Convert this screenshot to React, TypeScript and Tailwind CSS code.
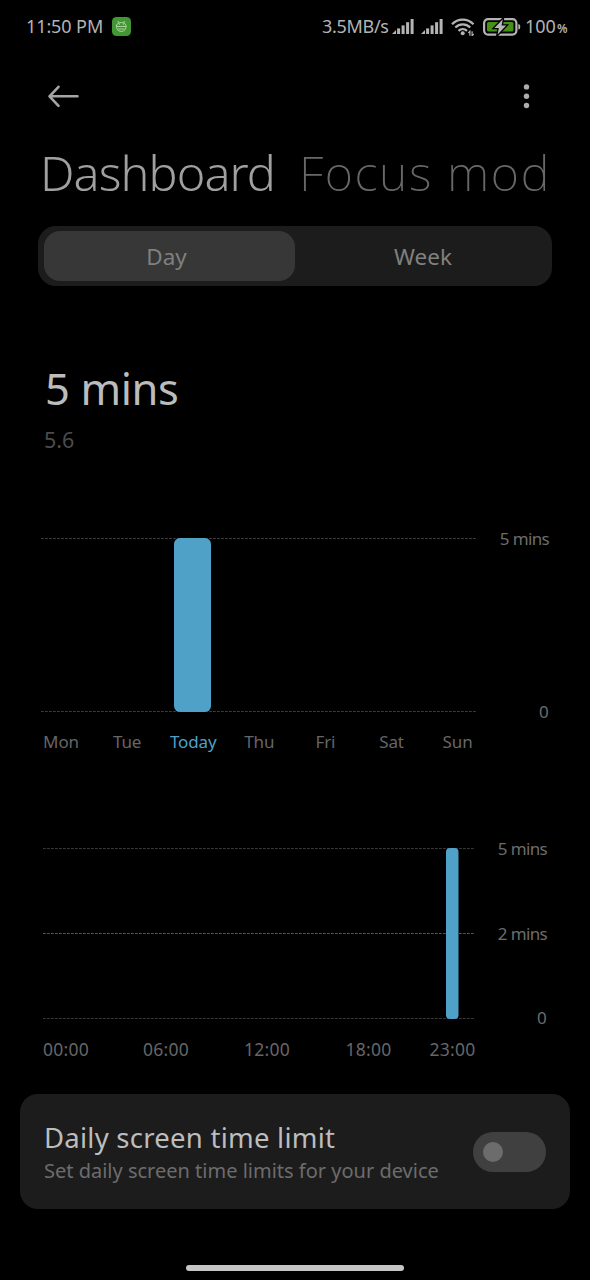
const weekDays = ["Mon", "Tue", "Today", "Thu", "Fri", "Sat", "Sun"];

function SignalIcon() {
  return (
    <svg width="22" height="16" viewBox="0 0 22 16" fill="#b4b4b4">
      <path d="M0 15 L4 11 V15Z" />
      <rect x="5.1" y="9.4" width="3" height="5.6" />
      <rect x="9.6" y="6.4" width="3" height="8.6" />
      <rect x="14.1" y="3.2" width="3" height="11.8" />
      <rect x="18.6" y="0" width="3" height="15" />
    </svg>
  );
}

function WifiIcon() {
  return (
    <svg width="24" height="18" viewBox="0 0 24 18" fill="none" stroke="#b4b4b4" strokeWidth="2.300">
      <path d="M1 6.2 C7 0.1 16.500 0.1 22.500 6.2" />
      <path d="M4.300 9.500 C8.500 5.400 15 5.400 19.200 9.500" />
      <path d="M7.500 12.800 C10 10.500 13.500 10.500 16 12.800" />
      <circle cx="11.700" cy="15.200" r="2" fill="#b4b4b4" stroke="none" />
      <path d="M18.900 17.700 V13.200 L17.300 14.900 M21.100 13.200 V17.700 L22.700 16" strokeWidth="1.200" />
    </svg>
  );
}

function BatteryIcon() {
  return (
    <svg width="38" height="18" viewBox="0 0 38 18">
      <rect x="1.1" y="1.1" width="32.300" height="15.500" rx="4" fill="none" stroke="#b4b4b4" strokeWidth="2.200" />
      <rect x="4" y="4" width="26.500" height="9.600" rx="1.500" fill="#459212" />
      <path d="M35.300 6 Q37.300 6.200 37.300 8.800 Q37.300 11.400 35.300 11.600Z" fill="#b4b4b4" />
      <path d="M19.800 1.200 L11.400 10 H15.800 L14.600 16.600 L23.200 7.600 H18.600Z" fill="#b8b8b8" stroke="#000" strokeWidth="2.600" paintOrder="stroke" />
    </svg>
  );
}

function AppBadge() {
  return (
    <svg width="19" height="19" viewBox="0 0 19 19" fill="none">
      <rect width="19" height="19" rx="4.500" fill="#429633" />
      <g stroke="#b3d9aa" strokeWidth="0.900" strokeLinecap="round">
        <path d="M6 4.300 L7 6 M12.500 4.300 L11.500 6 M4.500 8.200 Q5 5.500 9.200 5.500 Q13.500 5.500 14 8.200 Q14.500 14.200 9.200 14.500 Q4 14.200 4.500 8.200 M4.500 9.500 H14 M6.500 12 H12" />
        <path d="M7.200 7.600 h0.200 M11.200 7.600 h0.200" />
      </g>
    </svg>
  );
}

function StatusBar() {
  return (
    <div className="flex h-[53px] items-center pl-[26px] text-[18px] text-[#b4b4b4]">
      <span className="w-[86px] whitespace-nowrap tracking-[-0.1px]">11:50 PM</span>
      <AppBadge />
      <span className="ml-[191px] w-[70px] whitespace-nowrap tracking-[-0.3px]">3.5MB/s</span>
      <SignalIcon />
      <span className="ml-[7px]">
        <SignalIcon />
      </span>
      <span className="ml-[8px]">
        <WifiIcon />
      </span>
      <span className="ml-[8px]">
        <BatteryIcon />
      </span>
      <span className="ml-[4px] w-[32px]">100</span>
      <span className="pt-[5px] text-[12px] font-semibold">%</span>
    </div>
  );
}

function Header() {
  return (
    <header className="flex h-[86px] items-center justify-between pr-[59px] pl-[47px]">
      <svg width="33" height="24" viewBox="0 0 33 24" fill="none" stroke="#a5a5a5" strokeWidth="2.600" strokeLinecap="round" strokeLinejoin="round">
        <path d="M30.500 12.300 H2.500 M11.500 2.800 L2.500 12.300 L11.500 21.800" />
      </svg>
      <svg width="9" height="26" viewBox="0 0 9 26" fill="#adadad">
        <circle cx="4.500" cy="3.900" r="2.700" />
        <circle cx="4.500" cy="13.200" r="2.700" />
        <circle cx="4.500" cy="22.500" r="2.700" />
      </svg>
    </header>
  );
}

function WeekChart() {
  return (
    <section className="mt-[69px]">
      <div className="flex h-[204px] justify-between pr-[41px] pl-[41px]">
        <svg width="436" height="204" viewBox="0 0 436 204">
          <path d="M0 15.500 H435 M0 188.500 H435" stroke="#3c3c3c" strokeWidth="1" strokeDasharray="2.800 1.200" />
          <rect x="133" y="15" width="37" height="174" rx="6" fill="#4fa1c8" />
        </svg>
        <div className="flex flex-col items-end justify-between text-[17px] leading-[31px] tracking-[-0.65px] text-[#6c6c6c]">
          <span>5 mins</span>
          <span className="pr-px">0</span>
        </div>
      </div>
      <div className="ml-[28px] flex h-[30px] text-[17px] leading-[30px] tracking-[-0.1px] text-[#666]">
        {weekDays.map((day) => (
          <span key={day} className={day === "Today" ? "w-[66.1px] text-center text-[#4fa1c8]" : "w-[66.1px] text-center"}>
            {day}
          </span>
        ))}
      </div>
    </section>
  );
}

function HourChart() {
  return (
    <section className="mt-[76px]">
      <div className="flex h-[200px] justify-between pr-[43px] pl-[43px]">
        <svg width="432" height="200" viewBox="0 0 432 200">
          <path d="M0 15.500 H431 M0 185.500 H431" stroke="#383838" strokeWidth="1" strokeDasharray="2.800 1.200" />
          <path d="M0 100.500 H431" stroke="#545454" strokeWidth="1" strokeDasharray="2.800 1.200" />
          <rect x="403" y="15" width="12.500" height="171" rx="4" fill="#4fa1c8" />
        </svg>
        <div className="flex flex-col items-end justify-between text-[17px] leading-[31px] tracking-[-0.65px] text-[#6c6c6c]">
          <span>5 mins</span>
          <span>2 mins</span>
          <span className="pr-px">0</span>
        </div>
      </div>
      <div className="ml-[16px] flex h-[30px] text-center text-[17.5px] leading-[32px] tracking-[0.3px] text-[#666]">
        <span className="w-[100px]">00:00</span>
        <span className="w-[100px]">06:00</span>
        <span className="w-[102px]">12:00</span>
        <span className="w-[101px]">18:00</span>
        <span className="w-[67px]">23:00</span>
      </div>
    </section>
  );
}

function LimitCard() {
  return (
    <section className="mx-[20px] mt-[31px] flex h-[115px] items-center justify-between rounded-[18px] bg-[#1c1c1c] pr-[24px] pl-[24px]">
      <div className="whitespace-nowrap">
        <div className="h-[36px] text-[27.5px] leading-[37px] tracking-[0.25px] text-[#bdbdbd]">Daily screen time limit</div>
        <div className="h-[30px] text-[20px] leading-[32px] text-[#6c6c6c]">Set daily screen time limits for your device</div>
      </div>
      <div className="flex h-[40px] w-[73px] items-center rounded-full bg-[#404040] pl-[10px]">
        <div className="size-[20px] rounded-full bg-[#6c6c6c]" />
      </div>
    </section>
  );
}

export default function App() {
  return (
    <main className="flex h-[1280px] w-[590px] flex-col overflow-hidden bg-black font-['Noto_Sans',sans-serif]">
      <StatusBar />
      <Header />
      <nav className="flex h-[70px] pl-[40px] text-[48.5px] leading-[67px] whitespace-nowrap">
        <span className="w-[259px] font-light tracking-[-0.9px] text-[#a0a0a0]">Dashboard</span>
        <span className="font-extralight tracking-[1.6px] text-[#686868]">Focus mod</span>
      </nav>
      <div className="mx-[38px] mt-[17px] flex h-[60px] rounded-[18px] bg-[#1c1c1c] p-[5px] text-center text-[22.5px] leading-[51px] text-[#808080]">
        <div className="ml-px h-[50px] w-[251px] rounded-[16px] bg-[#373737] pr-[6px]">Day</div>
        <div className="flex-1 pl-[4px]">Week</div>
      </div>
      <section className="mt-[72px] pl-[45px]">
        <h1 className="h-[60px] text-[43.5px] leading-[60px] tracking-[-0.4px] text-[#bcbcbc]">5 mins</h1>
        <p className="mt-[6px] -ml-px h-[30px] text-[21.5px] leading-[32px] text-[#4c4c4c]">5.6</p>
      </section>
      <WeekChart />
      <HourChart />
      <LimitCard />
      <div className="mx-auto mt-[56px] h-[6px] w-[218px] rounded-full bg-[#c6c6c6]" />
    </main>
  );
}
